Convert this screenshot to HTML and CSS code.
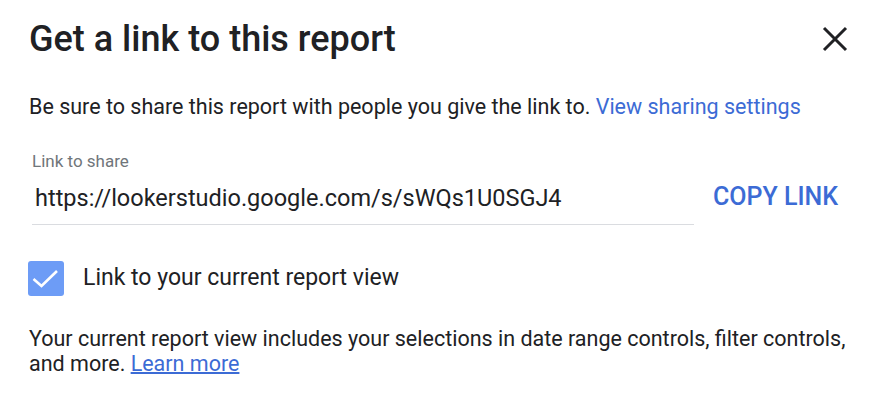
FILE: index.html
```html
<!DOCTYPE html>
<html>
<head>
<meta charset="utf-8">
<link rel="stylesheet" href="styles.css">
</head>
<body>
<div class="dialog">
  <div class="header">
    <h1 class="title">Get a link to this report</h1>
    <button class="close" aria-label="Close">
      <svg width="26" height="26" viewBox="0 0 26 26"><path d="M2 2 L24 24 M24 2 L2 24" stroke="#202124" stroke-width="3" fill="none"/></svg>
    </button>
  </div>
  <p class="intro">Be sure to share this report with people you give the link to. <a class="link" href="#">View sharing settings</a></p>
  <div class="share-row">
    <div class="field">
      <div class="field-label">Link to share</div>
      <div class="field-value">https://lookerstudio.google.com/s/sWQs1U0SGJ4</div>
    </div>
    <button class="copy">COPY LINK</button>
  </div>
  <label class="check-row">
    <span class="checkbox"><svg width="36" height="35" viewBox="0 0 36 35"><path d="M5.5 18 L13.5 25 L29 10" stroke="#fff" stroke-width="2.6" fill="none"/></svg></span>
    <span class="check-label">Link to your current report view</span>
  </label>
  <p class="note">Your current report view includes your selections in date range controls, filter controls, and more. <a class="link under" href="#">Learn more</a></p>
</div>
</body>
</html>
```
FILE: styles.css
```css
html, body { margin: 0; padding: 0; background: #fff; }
body { font-family: Roboto, "Noto Sans", sans-serif; color: #202124; }
.dialog { width: 884px; height: 402px; box-sizing: border-box; padding: 18px 30px 0 29px; }
.header { display: flex; justify-content: space-between; align-items: center; height: 42px; }
.title { margin: 0; font-size: 36px; font-weight: 500; line-height: 42px; }
.close { border: 0; background: none; padding: 0; width: 26px; height: 26px; display: flex; margin-right: 6px; }
.intro { margin: 35px 0 0; font-size: 21.5px; line-height: 24px; }
.link { color: #3c6bd5; text-decoration: none; }
.link.under { text-decoration: underline; text-underline-offset: 1px; }
.share-row { display: flex; align-items: flex-start; margin-top: 32px; }
.field { width: 662px; margin-left: 3px; border-bottom: 1px solid #dadce0; }
.field-label { font-size: 17px; color: #70757a; line-height: 20px; }
.field-value { font-size: 23.5px; line-height: 28px; padding: 13px 0 12px 3px; }
.copy { border: 0; background: none; padding: 0; margin: 32px 0 0 19px; font-family: inherit; font-size: 25px; line-height: 28px; font-weight: 500; color: #3c6bd5; }
.check-row { display: flex; align-items: center; margin: 36px 0 0 -1px; }
.checkbox { width: 36px; height: 35px; border-radius: 3px; background: #6d9cf6; display: flex; }
.check-label { margin-left: 19px; font-size: 23px; line-height: 28px; margin-top: -2px; }
.note { margin: 30px 0 0; font-size: 21.5px; line-height: 25px; }
```
